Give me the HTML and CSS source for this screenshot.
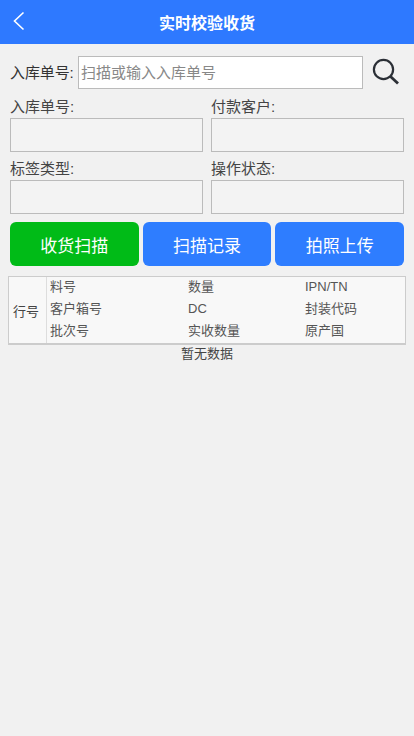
FILE: index.html
```html
<!DOCTYPE html>
<html lang="zh-CN">
<head>
<meta charset="utf-8">
<title>实时校验收货</title>
<link rel="stylesheet" href="styles.css">
</head>
<body>
<header class="topbar">
  <svg class="back" width="14" height="20" viewBox="0 0 14 20"><path d="M11.5 1.5 L2.5 10 L11.5 18.5" fill="none" stroke="#fff" stroke-width="1.6"/></svg>
  <h1 class="title">实时校验收货</h1>
</header>
<main class="content">
  <div class="search-row">
    <label class="search-label">入库单号:</label>
    <input class="search-input" type="text" placeholder="扫描或输入入库单号">
    <svg class="search-icon" width="27" height="27" viewBox="0 0 27 27"><circle cx="11.5" cy="11.5" r="9.6" fill="none" stroke="#2b2f36" stroke-width="2.2"/><path d="M18.5 18.5 L26 25.5" stroke="#2b2f36" stroke-width="2.8" fill="none"/></svg>
  </div>
  <div class="fields">
    <div class="field"><div class="field-label">入库单号:</div><div class="field-box"></div></div>
    <div class="field"><div class="field-label">付款客户:</div><div class="field-box"></div></div>
    <div class="field"><div class="field-label">标签类型:</div><div class="field-box"></div></div>
    <div class="field"><div class="field-label">操作状态:</div><div class="field-box"></div></div>
  </div>
  <div class="actions">
    <button class="btn btn-green">收货扫描</button>
    <button class="btn">扫描记录</button>
    <button class="btn">拍照上传</button>
  </div>
  <div class="table">
    <div class="col-no">行号</div>
    <div class="col-grid">
      <span>料号</span><span>数量</span><span>IPN/TN</span>
      <span>客户箱号</span><span>DC</span><span>封装代码</span>
      <span>批次号</span><span>实收数量</span><span>原产国</span>
    </div>
  </div>
  <div class="empty">暂无数据</div>
</main>
</body>
</html>
```
FILE: styles.css
```css
* { box-sizing: border-box; }
html, body { margin: 0; padding: 0; }
body {
  width: 414px;
  height: 736px;
  overflow: hidden;
  background: #f1f1f1;
  font-family: "Liberation Sans", "Noto Sans CJK SC", sans-serif;
  color: #333;
}
.topbar {
  position: relative;
  height: 44px;
  background: #2e79ff;
  display: flex;
  align-items: center;
  justify-content: center;
}
.back { position: absolute; left: 12px; top: 11px; }
.title { margin: 0; font-size: 16px; font-weight: 700; color: #fff; }
.content { padding: 12px 10px 0; }
.search-row { display: flex; align-items: flex-start; height: 34px; }
.search-label { font-size: 15px; line-height: 33px; width: 68px; flex: none; white-space: nowrap; letter-spacing: -0.1px; }
.search-input {
  width: 285px;
  height: 33px;
  flex: none;
  border: 1px solid #bbb;
  background: #fff;
  padding: 0 2px;
  font-size: 15px;
  font-family: inherit;
  outline: none;
}
.search-input::placeholder { color: #888; opacity: 1; }
.search-icon { margin: 2px 0 0 9px; flex: none; }
.fields {
  margin-top: 7px;
  display: grid;
  grid-template-columns: 193px 193px;
  column-gap: 8px;
  row-gap: 7px;
}
.field-label { font-size: 15px; line-height: 20px; height: 21px; color: #444; }
.field-box { height: 34px; border: 1px solid #bbb; background: #f3f3f3; }
.actions { margin-top: 8px; display: flex; gap: 4px; }
.btn {
  flex: 1;
  height: 44px;
  border: 0;
  border-radius: 6px;
  background: #2e7dff;
  color: #fff;
  font-size: 17px;
  font-family: inherit;
  padding: 0;
}
.btn-green { background: #00bb17; }
.table {
  margin: 10px 0 0 -2px;
  width: 398px;
  height: 69px;
  display: flex;
  border: 1px solid #ccc;
  border-bottom-width: 2px;
  background: #f8f8f8;
  font-size: 13px;
  color: #555;
}
.col-no {
  width: 38px;
  flex: none;
  border-right: 1px solid #ddd;
  display: flex;
  align-items: center;
  justify-content: center;
  padding-right: 3px;
  color: #444;
}
.col-grid {
  flex: 1;
  display: grid;
  grid-template-columns: 138px 117px 1fr;
  grid-auto-rows: 22px;
  padding-left: 3px;
  align-items: start;
  line-height: 20px;
}
.empty { text-align: center; font-size: 13px; line-height: 18px; color: #444; }
```
